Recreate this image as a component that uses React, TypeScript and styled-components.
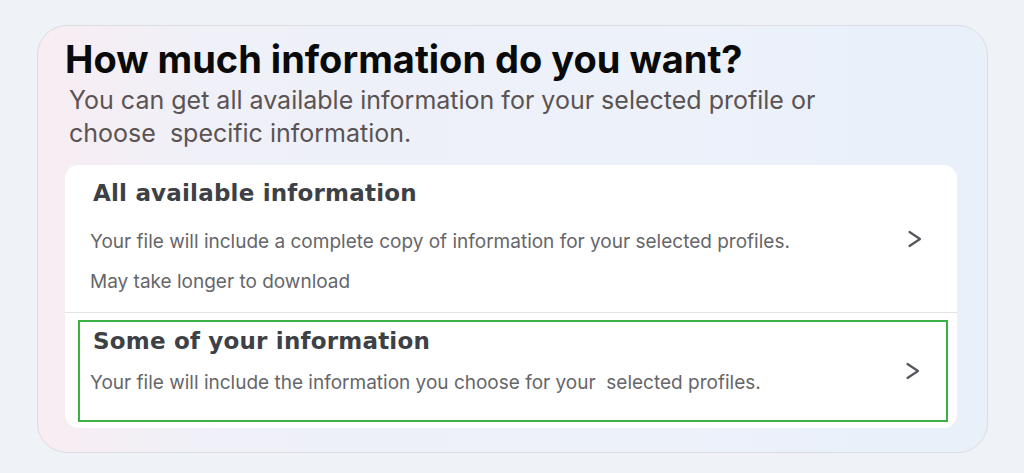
import styled, { createGlobalStyle } from "styled-components";

const GlobalStyle = createGlobalStyle`
  html, body {
    margin: 0;
    padding: 0;
    background: #eff2f7;
    font-family: Inter, "Noto Sans", sans-serif;
  }
`;

const Page = styled.div`
  width: 1024px;
  height: 473px;
  padding: 25px 0 0 37px;
  box-sizing: border-box;
`;

const Panel = styled.section`
  width: 951px;
  height: 428px;
  box-sizing: border-box;
  border: 1.5px solid #dcdde0;
  border-radius: 30px;
  background: linear-gradient(90deg, #f8edf2 0%, #eff0f8 18%, #ecf1fa 70%, #e9f0f9 100%);
  padding: 11px 30px 0 27px;
  display: flex;
  flex-direction: column;
`;

const Heading = styled.h1`
  margin: 0;
  font-size: 38px;
  font-weight: 700;
  color: #0a0a0a;
  line-height: 44px;
`;

const Intro = styled.p`
  margin: 3px 0 0 4px;
  font-size: 25px;
  line-height: 33px;
  color: #5b5353;
  white-space: pre-wrap;
`;

const Card = styled.div`
  margin-top: 15px;
  height: 263px;
  flex-shrink: 0;
  background: #ffffff;
  border-radius: 14px;
  display: flex;
  flex-direction: column;
  overflow: hidden;
`;

const Option = styled.div<{ $selected?: boolean }>`
  display: flex;
  align-items: center;
  justify-content: space-between;
  box-sizing: border-box;
  flex-shrink: 0;
  height: ${({ $selected }) => ($selected ? "102px" : "147px")};
  margin: ${({ $selected }) => ($selected ? "7px 9px 0 13px" : "0")};
  padding: ${({ $selected }) => ($selected ? "5px 25px 5px 10px" : "9px 34px 9px 25px")};
  border: ${({ $selected }) => ($selected ? "2px solid #3cb043" : "none")};
`;

const Divider = styled.div`
  height: 1px;
  flex-shrink: 0;
  background: #e4e4e4;
`;

const OptionText = styled.div<{ $pad: string }>`
  display: flex;
  flex-direction: column;
  padding: ${({ $pad }) => $pad};
`;

const OptionTitle = styled.div<{ $gap: number }>`
  font-family: "DejaVu Sans", "Noto Sans", sans-serif;
  font-size: 23px;
  font-weight: 600;
  letter-spacing: 0.2px;
  color: #3d4145;
  line-height: 28px;
  margin-left: 3px;
  margin-bottom: ${({ $gap }) => $gap}px;
`;

const OptionLine = styled.div`
  font-size: 19px;
  color: #66666a;
  line-height: 40px;
  white-space: pre-wrap;
`;

const Chevron = () => (
  <svg width="16" height="18" viewBox="0 0 16 18" fill="none">
    <path d="M2.5 2 L13 9 L2.5 16" stroke="#54575b" strokeWidth="2.2" strokeLinecap="round" strokeLinejoin="round" />
  </svg>
);

export default function App() {
  return (
    <>
      <GlobalStyle />
      <Page>
        <Panel>
          <Heading>How much information do you want?</Heading>
          <Intro>
            You can get all available information for your selected profile or
            <br />
            choose  specific information.
          </Intro>
          <Card>
            <Option>
              <OptionText $pad="5px 0 1px">
                <OptionTitle $gap={15}>All available information</OptionTitle>
                <OptionLine>Your file will include a complete copy of information for your selected profiles.</OptionLine>
                <OptionLine>May take longer to download</OptionLine>
              </OptionText>
              <Chevron />
            </Option>
            <Divider />
            <Option $selected>
              <OptionText $pad="0 0 12px">
                <OptionTitle $gap={8}>Some of your information</OptionTitle>
                <OptionLine>Your file will include the information you choose for your  selected profiles.</OptionLine>
              </OptionText>
              <Chevron />
            </Option>
          </Card>
        </Panel>
      </Page>
    </>
  );
}
